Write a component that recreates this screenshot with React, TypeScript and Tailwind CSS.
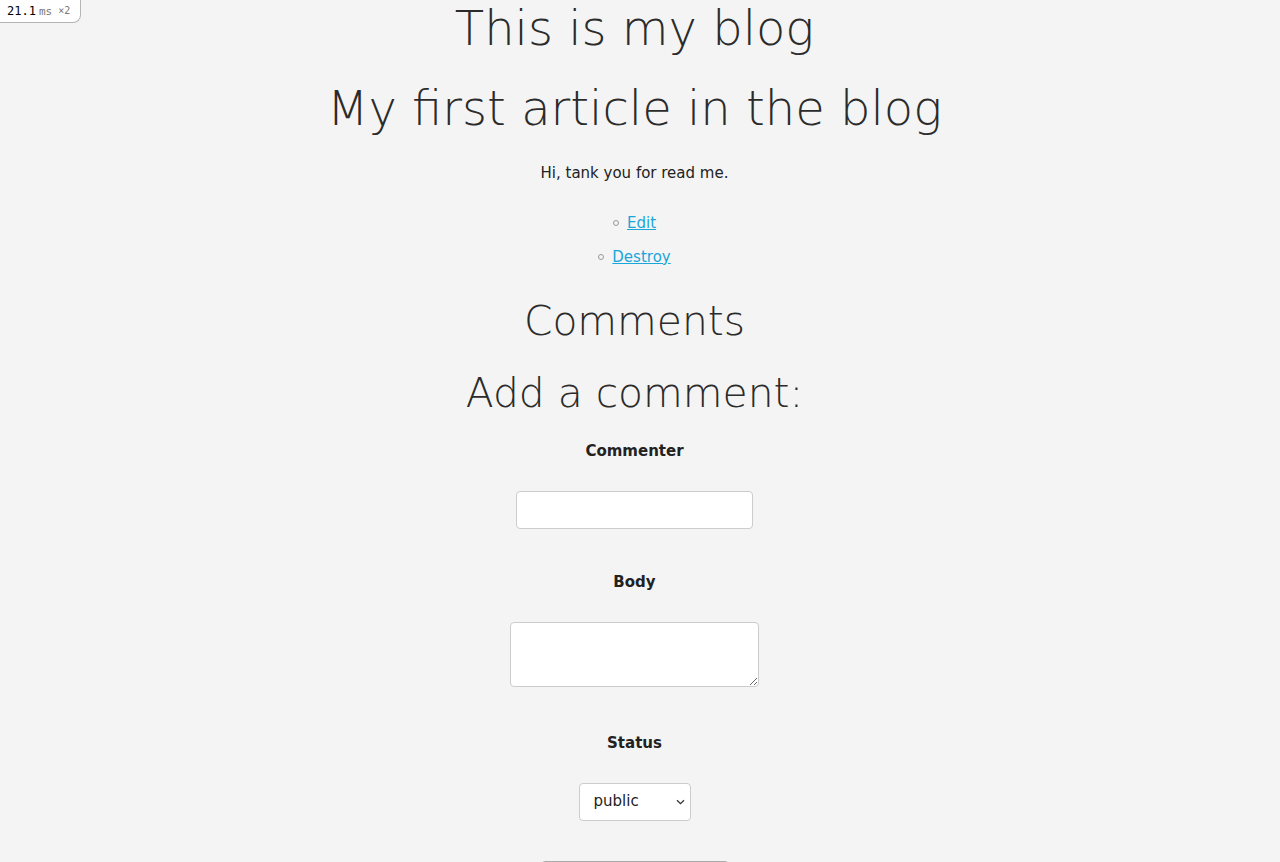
import React from "react";

export default function App() {
  return (
    <div className="min-h-[862px] bg-[#f4f4f4] text-[#222] text-[15px] leading-[1.5] font-['DejaVu_Sans',sans-serif] text-center relative pr-[11px]">
      <div className="absolute left-0 top-0 w-[81px] h-[23px] bg-white border border-t-0 border-l-0 border-[#b5b5b5] rounded-br-[8px] flex items-center pl-[7px] font-['DejaVu_Sans_Mono',monospace] leading-none">
        <span className="text-[12px] text-black">21.1</span>
        <span className="text-[11px] text-[#777] ml-[3px]">ms</span>
        <span className="text-[10px] text-[#777] ml-[6px]">×2</span>
      </div>

      <h1 className="text-[48px] font-extralight leading-[1.2] text-[#2b2b2b]">This is my blog</h1>
      <h1 className="text-[48px] font-extralight leading-[1.2] text-[#2b2b2b] mt-[22px]">My first article in the blog</h1>
      <p className="mt-[25px]">Hi, tank you for read me.</p>
      <ul className="mt-[27px] flex flex-col items-center">
        <li className="flex items-center">
          <span className="w-[6px] h-[6px] rounded-full border border-[#9a9a9a] mr-[8px]"></span>
          <a href="#" className="text-[#1ba6da] underline">Edit</a>
        </li>
        <li className="flex items-center mt-[11.5px]">
          <span className="w-[6px] h-[6px] rounded-full border border-[#9a9a9a] mr-[8px]"></span>
          <a href="#" className="text-[#1ba6da] underline">Destroy</a>
        </li>
      </ul>
      <h2 className="text-[40.8px] font-extralight leading-[1.2] text-[#2b2b2b] mt-[29px]">Comments</h2>
      <h2 className="text-[40.8px] font-extralight leading-[1.2] text-[#2b2b2b] mt-[23px]">Add a comment:</h2>
      <form className="flex flex-col items-center">
        <label className="font-bold mt-[22px]">Commenter</label>
        <input type="text" className="mt-[28px] w-[237px] h-[38px] bg-white border border-[#ccc] rounded-[4px]" />
        <label className="font-bold mt-[42px]">Body</label>
        <textarea className="mt-[29px] w-[249px] h-[65px] bg-white border border-[#ccc] rounded-[4px] resize" />
        <label className="font-bold mt-[45px]">Status</label>
        <div className="relative mt-[28px] w-[112px] h-[38px]">
          <select className="appearance-none w-full h-full bg-white border border-[#ccc] rounded-[4px] pl-[14px] pr-[20px] text-[15px] text-[#222] font-['DejaVu_Sans',sans-serif] text-left">
            <option>public</option>
            <option>private</option>
            <option>archived</option>
          </select>
          <svg className="absolute right-[6px] top-[16px] pointer-events-none" width="9" height="6" viewBox="0 0 9 6" fill="none">
            <path d="M1 1.2 L4.5 4.6 L8 1.2" stroke="#333" strokeWidth="1.3" />
          </svg>
        </div>
        <button type="button" className="mt-[40px] w-[188px] h-[40px] bg-[#e8e8e8] border border-[#aaa] rounded-[4px]">Create Comment</button>
      </form>
    </div>
  );
}
